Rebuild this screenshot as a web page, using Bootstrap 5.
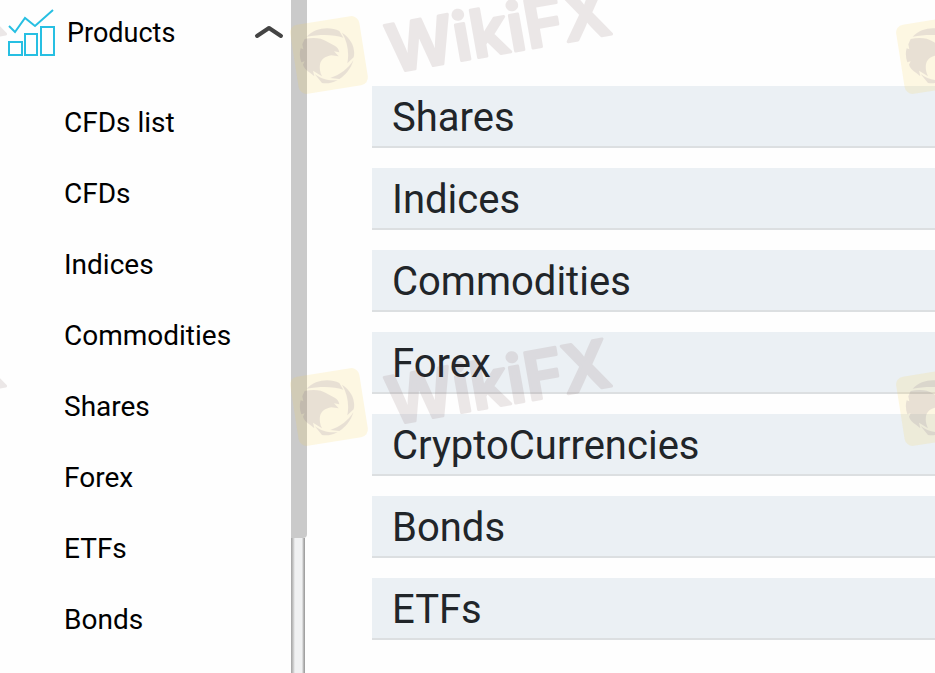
<!DOCTYPE html>
<html lang="en">
<head>
<meta charset="utf-8">
<meta name="viewport" content="width=device-width, initial-scale=1">
<title>Products</title>
<link href="https://cdn.jsdelivr.net/npm/bootstrap@5.3.0/dist/css/bootstrap.min.css" rel="stylesheet">
<style>
body { font-family: Roboto, "Liberation Sans", sans-serif; background: #fefefe; }
.side-menu { width: 291px; background: #fefefe; }
.menu-toggle { height: 65px; padding: 0 7px; font-size: 27px; line-height: 32px; }
.menu-toggle, .menu-toggle:hover { color: #000; }
.menu-links { padding: 22px 0 0 64px; }
.menu-links a { height: 71px; font-size: 28px; line-height: 72px; color: #000; }
.scroll-rail { width: 16px; }
.scroll-thumb { height: 80vh; background: #cacaca; border-radius: 0 0 4px 0; }
.scroll-track { width: 14px; background: linear-gradient(to right, #a2a2a2 0, #c4c4c4 2px, #f0f1f2 4px, #f0f1f2 11px, #c4c4c4 12px, #969696 14px); }
.product-list { padding: 86px 0 32px 65px; gap: 20px; }
.product-row { height: 62px; padding: 3px 20px 0; font-size: 40px; line-height: 56px; color: #212529; background: #ebf0f4; border: 0; border-bottom: 2px solid #dcdfe1; }
.wm-word { font: 600 66px Inter, sans-serif; fill: #5e3636; stroke: #5e3636; stroke-width: 3px; stroke-linejoin: round; }
</style>
<script src="https://cdn.jsdelivr.net/npm/bootstrap@5.3.0/dist/js/bootstrap.bundle.min.js"></script>
</head>
<body>
<div class="position-relative overflow-hidden d-flex vh-100">
  <nav class="side-menu flex-shrink-0" aria-label="Products">
    <button class="menu-toggle btn rounded-0 border-0 w-100 d-flex align-items-center" type="button" data-bs-toggle="collapse" data-bs-target="#links" aria-expanded="true" aria-controls="links">
      <svg width="48" height="48" viewBox="0 0 48 48" fill="none" stroke="#27bfe2" stroke-width="2" aria-hidden="true">
        <path d="M2 17 8 23 18 9 28 17 46 1M2 33H15V46H2ZM18 25H30V46H18ZM34 18H47V46H34Z"/>
      </svg>
      <span class="ms-2 ps-1">Products</span>
      <svg class="ms-auto" width="30" height="18" viewBox="0 0 30 18" fill="none" stroke="#444" stroke-width="4" stroke-linecap="round" stroke-linejoin="round" aria-hidden="true">
        <path d="M3 12 15 4 27 12"/>
      </svg>
    </button>
    <div id="links" class="collapse show">
      <div class="menu-links d-flex flex-column">
        <a class="text-decoration-none" href="#">CFDs list</a>
        <a class="text-decoration-none" href="#">CFDs</a>
        <a class="text-decoration-none" href="#">Indices</a>
        <a class="text-decoration-none" href="#">Commodities</a>
        <a class="text-decoration-none" href="#">Shares</a>
        <a class="text-decoration-none" href="#">Forex</a>
        <a class="text-decoration-none" href="#">ETFs</a>
        <a class="text-decoration-none" href="#">Bonds</a>
      </div>
    </div>
  </nav>
  <div class="scroll-rail flex-shrink-0 d-flex flex-column" aria-hidden="true">
    <div class="scroll-thumb"></div>
    <div class="scroll-track flex-grow-1"></div>
  </div>
  <main class="product-list flex-grow-1 d-flex flex-column">
    <button class="product-row text-start" type="button">Shares</button>
    <button class="product-row text-start" type="button">Indices</button>
    <button class="product-row text-start" type="button">Commodities</button>
    <button class="product-row text-start" type="button">Forex</button>
    <button class="product-row text-start" type="button">CryptoCurrencies</button>
    <button class="product-row text-start" type="button">Bonds</button>
    <button class="product-row text-start" type="button">ETFs</button>
  </main>
  <!-- Repeating watermark laid over the page -->
  <svg class="position-absolute top-0 start-0 w-100 h-100 pe-none" aria-hidden="true">
    <defs>
      <g id="wm-logo">
        <rect x="294" y="20" width="70" height="70" rx="8" fill="#f8d040" opacity=".15" transform="rotate(-9 329 55)"/>
        <g transform="translate(280 0) scale(.3333)" fill="#5c4478" opacity=".12">
          <path d="M80 110C105 82 150 78 178 93L190 113C160 102 118 103 80 110Z"/>
          <path d="M186 98C215 116 227 146 221 172L202 190C208 160 203 126 186 98Z"/>
          <path d="M220 181C213 206 197 226 178 237L151 234C181 224 205 206 220 181Z"/>
          <path d="M173 240C158 249 140 252 126 249L104 222C124 238 149 243 173 240Z"/>
          <path d="M74 117C98 111 125 113 139 124L164 137Q176 144 178 157L162 154 176 169 154 166C135 169 123 178 120 193 118 205 120 218 126 229L99 212 103 229 91 219C78 210 72 203 69 194L74 184 64 187C59 173 58 158 62 145L70 148 67 133Z"/>
        </g>
      </g>
      <g id="wm-name" opacity=".11">
        <text class="wm-word" transform="translate(391 73) rotate(-10)">WikiFX</text>
      </g>
    </defs>
    <use href="#wm-logo"/>
    <use href="#wm-name"/>
    <use href="#wm-logo" x="606"/>
    <use href="#wm-name" x="-606"/>
    <use href="#wm-logo" y="352"/>
    <use href="#wm-name" y="352"/>
    <use href="#wm-logo" x="606" y="352"/>
    <use href="#wm-name" x="-606" y="352"/>
  </svg>
</div>
</body>
</html>
